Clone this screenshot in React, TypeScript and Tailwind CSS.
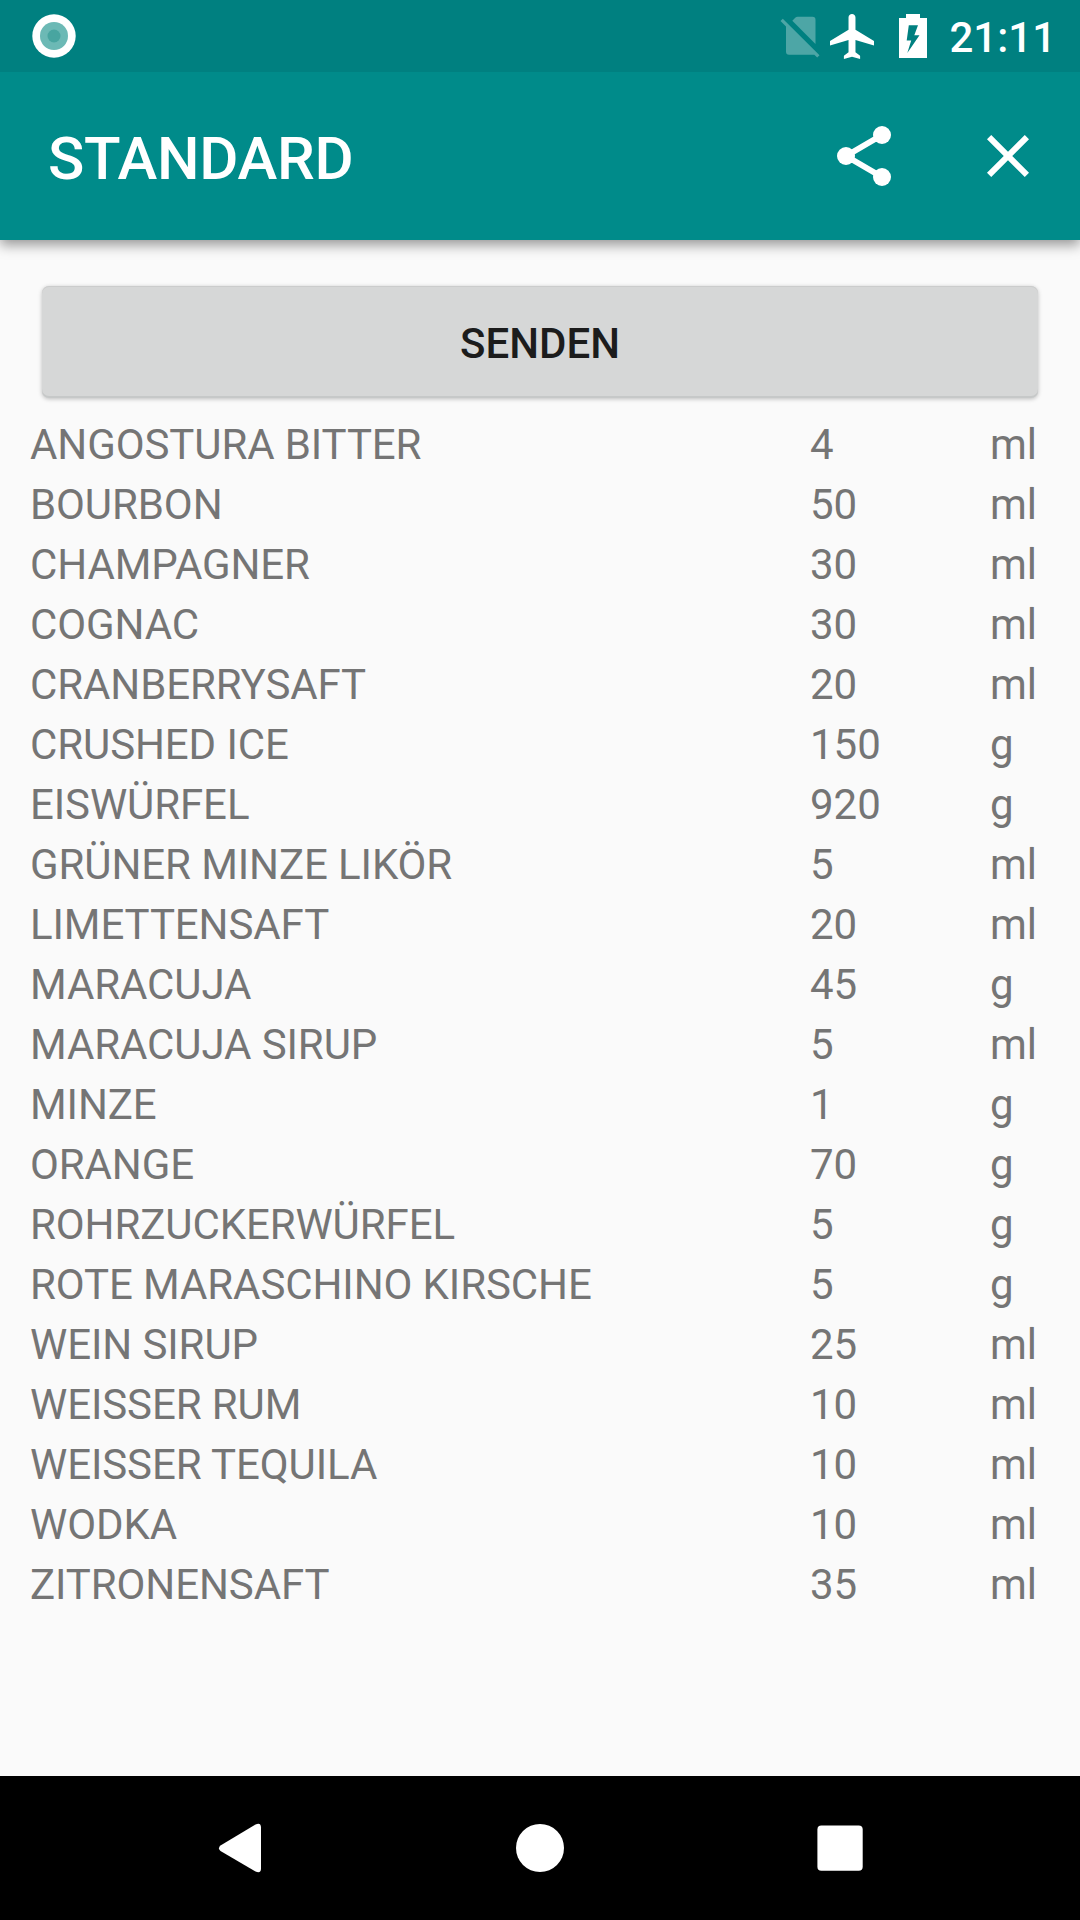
const rows: [string, number, string][] = [
  ['ANGOSTURA BITTER', 4, 'ml'],
  ['BOURBON', 50, 'ml'],
  ['CHAMPAGNER', 30, 'ml'],
  ['COGNAC', 30, 'ml'],
  ['CRANBERRYSAFT', 20, 'ml'],
  ['CRUSHED ICE', 150, 'g'],
  ['EISWÜRFEL', 920, 'g'],
  ['GRÜNER MINZE LIKÖR', 5, 'ml'],
  ['LIMETTENSAFT', 20, 'ml'],
  ['MARACUJA', 45, 'g'],
  ['MARACUJA SIRUP', 5, 'ml'],
  ['MINZE', 1, 'g'],
  ['ORANGE', 70, 'g'],
  ['ROHRZUCKERWÜRFEL', 5, 'g'],
  ['ROTE MARASCHINO KIRSCHE', 5, 'g'],
  ['WEIN SIRUP', 25, 'ml'],
  ['WEISSER RUM', 10, 'ml'],
  ['WEISSER TEQUILA', 10, 'ml'],
  ['WODKA', 10, 'ml'],
  ['ZITRONENSAFT', 35, 'ml'],
];

function StatusBar() {
  return (
    <header className="relative z-10 flex h-[72px] items-center bg-[#008080] pr-[24px] pl-[32px] text-white">
      <svg className="size-[44px]" viewBox="0 0 44 44">
        <circle cx="22" cy="22" r="21.7" fill="#fff" />
        <circle cx="22" cy="22" r="14" fill="#6cb9b5" />
        <circle cx="22" cy="22" r="6.5" fill="#48a5a0" />
      </svg>
      <div className="ml-auto flex items-center">
        <svg className="h-[48px] w-[40px]" viewBox="0 0 40 48" fill="#4da6a6">
          <path d="M2.8 6.800L39.500 43.200L37.200 45.600L34.300 42.700H9Q6 42.700 6 39.500V14.600L0.500 9.100Z" />
          <path d="M12.300 8.800L15.500 5.500Q16.300 4.700 17.500 4.700H32.500Q35.500 4.700 35.500 7.700V32Z" />
        </svg>
        <svg className="ml-[10px] h-[45px] w-[44px]" viewBox="2 2 19 20" preserveAspectRatio="none" fill="#fff">
          <path d="M21 16v-2l-8-5V3.500c0-.83-.67-1.500-1.500-1.500S10 2.670 10 3.500V9l-8 5v2l8-2.500V19l-2 1.500V22l3.500-1 3.500 1v-1.500L13 19v-5.500l8 2.500z" />
        </svg>
        <svg className="ml-[25px] h-[44px] w-[28px]" viewBox="0 0 28 44" fill="#fff" fillRule="evenodd">
          <path d="M7 0H21V4H28V44H0V4H7ZM9.800 11.300L7.700 26.500H12.200L8.300 39L20.500 21.300H15.300L19 11.300Z" />
        </svg>
      </div>
      <span className="mt-[3px] ml-[22px] text-[42px] leading-none font-medium">21:11</span>
    </header>
  );
}

function AppBar() {
  return (
    <div className="relative flex h-[168px] items-center bg-[#008b8a] pr-[36px] pl-[48px] text-white shadow-[0_5px_12px_rgba(0,0,0,0.4)]">
      <h1 className="mt-[6px] text-[60px] leading-none font-medium tracking-[-0.3px]">STANDARD</h1>
      <svg className="ml-auto size-[72px]" viewBox="0 0 24 24" fill="#fff">
        <path d="M6 12L18 5M6 12L18 19" stroke="#fff" strokeWidth="2" />
        <circle cx="18" cy="5" r="3" />
        <circle cx="6" cy="12" r="3" />
        <circle cx="18" cy="19" r="3" />
      </svg>
      <svg className="ml-[72px] size-[72px]" viewBox="0 0 24 24" fill="#fff">
        <path d="M19 6.410L17.590 5 12 10.590 6.410 5 5 6.410 10.590 12 5 17.590 6.410 19 12 13.410 17.590 19 19 17.590 13.410 12z" />
      </svg>
    </div>
  );
}

export default function App() {
  return (
    <div className="flex h-[1920px] w-[1080px] flex-col overflow-hidden bg-[#fafafa] font-['Roboto',sans-serif]">
      <StatusBar />
      <AppBar />
      <main className="flex-1 pt-[46px]">
        <button className="mx-[42px] flex h-[112px] w-[996px] items-center justify-center rounded-[7px] bg-[#d6d7d7] pt-[2px] text-[42px] font-medium text-[#1c1c1c] shadow-[0_1px_4px_rgba(0,0,0,0.25),inset_0_-2px_0_#c6c8c8,inset_0_1px_0_#cbcccc]">
          SENDEN
        </button>
        <div className="mt-[17px] text-[42px] text-[#757575]">
          {rows.map(([name, amount, unit]) => (
            <div key={name} className="grid h-[60px] grid-cols-[780px_180px_90px] items-center pl-[30px] leading-[60px]">
              <span className="tracking-[-0.1px]">{name}</span>
              <span>{amount}</span>
              <span>{unit}</span>
            </div>
          ))}
        </div>
      </main>
      <nav className="flex h-[144px] items-center justify-between bg-black px-[210px]">
        <svg className="size-[60px]" viewBox="0 0 60 60" fill="#fff">
          <path d="M10.500 27.500Q7.500 30 10.500 33L45.500 53.500Q51 56 51 50.500V9.500Q51 4 45.500 6.500Z" />
        </svg>
        <svg className="size-[60px]" viewBox="0 0 60 60" fill="#fff">
          <circle cx="30" cy="30" r="24" />
        </svg>
        <svg className="size-[60px]" viewBox="0 0 60 60" fill="#fff">
          <rect x="7.400" y="7.400" width="45.300" height="45.300" rx="4" />
        </svg>
      </nav>
    </div>
  );
}
